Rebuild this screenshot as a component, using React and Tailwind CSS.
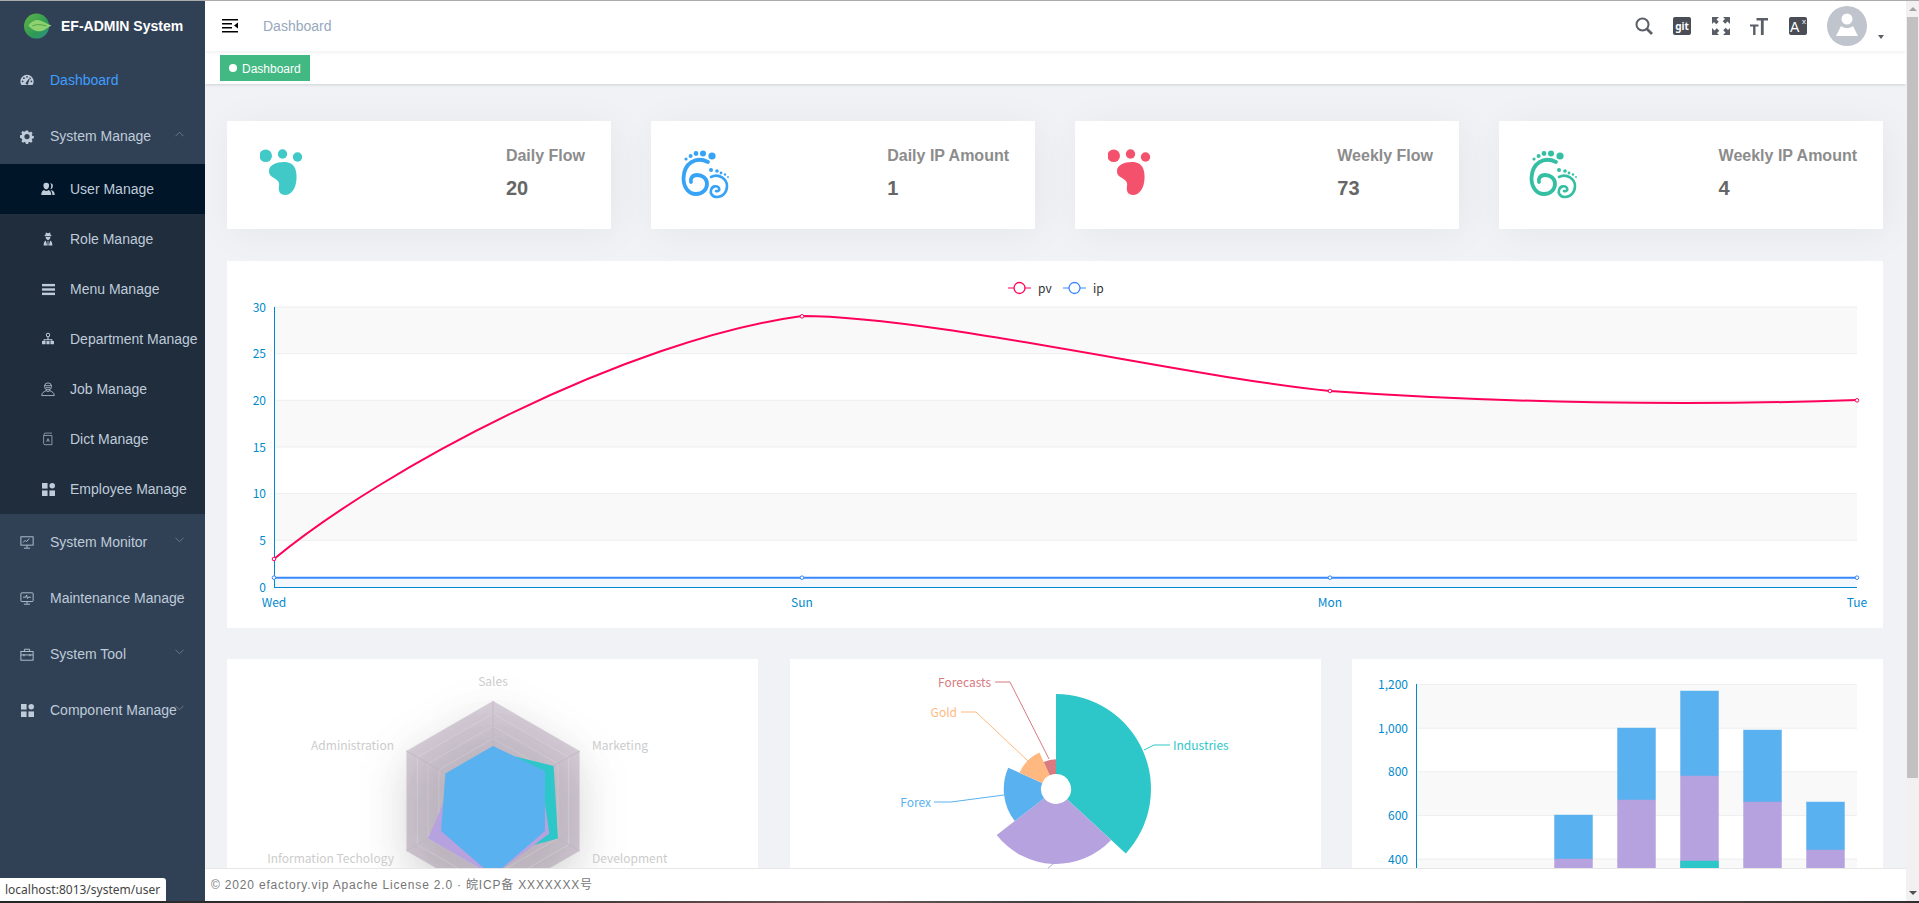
import React from "react";

const CHART_FONT = "'Noto Sans CJK SC','Noto Sans',sans-serif";

const Dash = () => (
  <svg viewBox="0 0 16 16" className="w-[16px] h-[16px]" fill="currentColor">
    <path fillRule="evenodd" d="M8 2a7.6 7.6 0 0 0-7.6 7.6c0 1.4.4 2.8 1.1 3.9.1.2.3.3.5.3h12c.2 0 .4-.1.5-.3.7-1.1 1.1-2.5 1.1-3.900A7.600 7.600 0 0 0 8 2zM3 10.500a1 1 0 1 1 0-2 1 1 0 0 1 0 2zm1.500-3.600a1 1 0 1 1 0-2 1 1 0 0 1 0 2zM8 5.400a1 1 0 1 1 0-2 1 1 0 0 1 0 2zm1.400 6.800a1.500 1.500 0 1 1-2.400-1.600L10.600 6l.7.3-1.800 5zM11.500 7a1 1 0 1 1 0-2 1 1 0 0 1 0 2zm1.500 3.500a1 1 0 1 1 0-2 1 1 0 0 1 0 2z" />
  </svg>
);
const Gear = () => (
  <svg viewBox="0 0 16 16" className="w-[15px] h-[15px]" fill="currentColor">
    <path fillRule="evenodd" d="M6.700 1h2.600l.4 1.900 1.200.5 1.700-1 1.800 1.800-1 1.700.5 1.200 1.900.4v2.600l-1.900.4-.5 1.200 1 1.700-1.800 1.800-1.700-1-1.200.5-.4 1.900H6.700l-.4-1.900-1.200-.5-1.700 1-1.800-1.800 1-1.700-.5-1.200L0 9.300V6.700l1.900-.4.5-1.200-1-1.700 1.800-1.800 1.700 1 1.200-.5L6.700 1zM8 5a3 3 0 1 0 0 6 3 3 0 0 0 0-6z" />
  </svg>
);
const Users = () => (
  <svg viewBox="0 0 16 16" className="w-[16px] h-[16px]" fill="currentColor">
    <path d="M6 .8a3.200 3.200 0 0 1 3.200 3.500C9.200 6.300 8 8.500 6 8.500S2.800 6.300 2.800 4.300A3.200 3.200 0 0 1 6 .8zM.3 14.800c0-3.300 1.500-5 3.200-5.600.7.600 1.600 1 2.500 1s1.800-.4 2.500-1c1.700.6 3.200 2.300 3.200 5.600H.3z" />
    <path d="M10.500 1.300a3 3 0 0 1 3 3.200c0 1.800-1.100 3.800-2.800 3.900.6-1.100 1-2.600 1-3.900 0-1.100-.4-2.200-1.200-3.200zM10.900 9c2.500.3 4.800 1.600 4.800 5.800H13c0-2.400-.7-4.400-2.100-5.800z" />
  </svg>
);
const Role = () => (
  <svg viewBox="0 0 16 16" className="w-[16px] h-[16px]" fill="currentColor">
    <path d="M5 3.500L5.600.5 8 1.300 10.400.5 11 3.500l1.500.8-1.500.6H5l-1.500-.6L5 3.500zM5.300 5.700h5.400c0 2-1.200 3.300-2.700 3.300S5.300 7.700 5.300 5.700zM3 15.500c0-3.300.8-5 2.500-5.800L7 15.500H3zm6 0l1.500-5.800c1.700.8 2.500 2.500 2.500 5.800H9zM7.600 10h.8l.3 5.500h-1.400l.3-5.500z" />
  </svg>
);
const MenuI = () => (
  <svg viewBox="0 0 14 14" className="w-[13px] h-[13px]" fill="currentColor">
    <rect x="0" y="1" width="14" height="2.600" />
    <rect x="0" y="5.700" width="14" height="2.600" />
    <rect x="0" y="10.400" width="14" height="2.600" />
  </svg>
);
const Tree = () => (
  <svg viewBox="0 0 16 16" className="w-[16px] h-[16px]" fill="currentColor">
    <path fillRule="evenodd" d="M8 .8a2.600 2.600 0 0 1 .6 5.100v2.500H13v2h1.800V14H10.800v-3.600h1.200V9.400H4v1h1.200V14H1.200v-3.600H3v-2h4.400V5.900A2.600 2.600 0 0 1 8 .8zm0 1.200a1.400 1.400 0 1 0 0 2.800A1.400 1.400 0 0 0 8 2z" />
    <rect x="6.200" y="10.400" width="3.600" height="3.600" />
  </svg>
);
const Job = () => (
  <svg viewBox="0 0 16 16" className="w-[16px] h-[16px]" fill="none" stroke="currentColor" strokeWidth="0.9">
    <circle cx="8" cy="5" r="4" />
    <path d="M4 4.200h8M5.500 6.500h5M6 8.500v1.500M10 8.500v1.500M.8 15.500c0-2.800 2.200-4.700 5.200-5.500.6 1 3.400 1 4 0 3 .8 5.200 2.700 5.200 5.500H.8z" />
  </svg>
);
const Dict = () => (
  <svg viewBox="0 0 16 16" className="w-[14px] h-[14px]" fill="none" stroke="currentColor" strokeWidth="1" opacity="0.75">
    <path d="M3.500 4V2.500c0-.8.500-1.200 1.200-1.200h7.800M3 4h9.500v10.500H4.500A1.500 1.500 0 0 1 3 13V4z" />
    <path d="M6.500 11l1.500-3.500L9.500 11M7 10h2" />
  </svg>
);
const Grid = () => (
  <svg viewBox="0 0 14 14" className="w-[13px] h-[13px]" fill="currentColor">
    <rect x="0" y="0" width="6" height="6" />
    <circle cx="11" cy="3" r="3" />
    <rect x="0" y="8" width="6" height="6" />
    <rect x="8" y="8" width="6" height="6" />
  </svg>
);
const Monitor = () => (
  <svg viewBox="0 0 16 16" className="w-[15px] h-[15px]" fill="none" stroke="currentColor" strokeWidth="1">
    <rect x="1" y="1.500" width="14" height="9.500" />
    <path d="M3.500 8l2.500-2.500 1.500 1.500 3-3.500M8 11v3M4.500 14.500h7" />
  </svg>
);
const Maint = () => (
  <svg viewBox="0 0 16 16" className="w-[15px] h-[15px]" fill="none" stroke="currentColor" strokeWidth="1">
    <rect x="1" y="1.500" width="14" height="10" rx="1" />
    <path d="M3.500 6.500h3l1-2.500 1 4 1-1.500h3M8 11.500v2.500M4.500 14.500h7" />
  </svg>
);
const Tool = () => (
  <svg viewBox="0 0 16 16" className="w-[15px] h-[15px]" fill="none" stroke="currentColor" strokeWidth="1">
    <rect x="1" y="4.500" width="14" height="10" />
    <path d="M5 4.500V2h6v2.500M1 8.500h14M4.500 7.500v2.500M11.500 7.500v2.500" />
  </svg>
);
const Chevron = ({ up }) => (
  <svg viewBox="0 0 10 6" className="absolute right-[21px] top-[23px] w-[9px] h-[6px] text-[#7f8b99]" fill="none" stroke="currentColor" strokeWidth="0.8">
    <path d={up ? "M.5 5.500L5 1l4.500 4.500" : "M.5 .5L5 5l4.500-4.500"} />
  </svg>
);

function TopItem({ icon, label, active, chev }) {
  return (
    <div className={`relative flex items-center h-[56px] pl-[20px] text-[14px] ${active ? "text-[#409eff]" : "text-[#bfcbd9]"}`}>
      <span className="w-[14px] mr-[16px] flex justify-center text-[#bfcbd9]">{icon}</span>
      <span className="whitespace-nowrap">{label}</span>
      {chev && <Chevron up={chev === "up"} />}
    </div>
  );
}
function SubItem({ icon, label, active }) {
  return (
    <div className={`flex items-center h-[50px] pl-[41px] text-[14px] text-[#bfcbd9] ${active ? "bg-[#001528]" : "bg-[#1f2d3d]"}`}>
      <span className="w-[14px] mr-[15px] flex justify-center">{icon}</span>
      <span className="whitespace-nowrap">{label}</span>
    </div>
  );
}

const Logo = () => (
  <svg viewBox="0 0 30 28" className="w-[30px] h-[27px]">
    <defs>
      <linearGradient id="lg" x1="0" y1="0" x2="1" y2="1">
        <stop offset="0" stopColor="#62b544" />
        <stop offset="0.6" stopColor="#2f9a55" />
        <stop offset="1" stopColor="#2a8f8a" />
      </linearGradient>
    </defs>
    <circle cx="13.500" cy="13.500" r="13" fill="url(#lg)" />
    <path d="M5 13c3-5 9-7 13-5 3 1 6 3 11 5-5 3-8 6-13 6-4 0-8-2-11-6z" fill="#8fd16f" />
    <path d="M9 13.500c4-2 8-2 15 0" stroke="#3f9a45" strokeWidth="0.8" fill="none" />
  </svg>
);

function Sidebar() {
  return (
    <aside className="w-[205px] shrink-0 bg-[#304156] font-['Liberation_Sans',sans-serif]">
      <div className="flex items-center h-[51px] pl-[23px]">
        <Logo />
        <span className="ml-[8px] text-[14px] font-bold text-white whitespace-nowrap">EF-ADMIN System</span>
      </div>
      <TopItem icon={<Dash />} label="Dashboard" active />
      <TopItem icon={<Gear />} label="System Manage" chev="up" />
      <SubItem icon={<Users />} label="User Manage" active />
      <SubItem icon={<Role />} label="Role Manage" />
      <SubItem icon={<MenuI />} label="Menu Manage" />
      <SubItem icon={<Tree />} label="Department Manage" />
      <SubItem icon={<Job />} label="Job Manage" />
      <SubItem icon={<Dict />} label="Dict Manage" />
      <SubItem icon={<Grid />} label="Employee Manage" />
      <TopItem icon={<Monitor />} label="System Monitor" chev="down" />
      <TopItem icon={<Maint />} label="Maintenance Manage" chev="down" />
      <TopItem icon={<Tool />} label="System Tool" chev="down" />
      <TopItem icon={<Grid />} label="Component Manage" chev="down" />
    </aside>
  );
}

const Hamburger = () => (
  <svg viewBox="0 0 16 14" className="w-[16px] h-[14px]" fill="#000">
    <rect x="0" y="0" width="16" height="1.500" />
    <rect x="0" y="4" width="10" height="1.500" />
    <rect x="0" y="8" width="10" height="1.500" />
    <rect x="0" y="12" width="16" height="1.500" />
    <path d="M16 3.500v6l-4-3z" />
  </svg>
);

function Header() {
  const c = "#5a5e66";
  return (
    <header className="flex items-center h-[50px] bg-white shadow-[0_1px_4px_rgba(0,21,41,0.08)] relative z-10 shrink-0">
      <span className="ml-[17px] flex"><Hamburger /></span>
      <span className="ml-[25px] text-[14px] text-[#97a8be]">Dashboard</span>
      <div className="ml-auto flex items-center h-full pr-[22px]">
        <svg viewBox="0 0 18 18" className="w-[18px] h-[18px]" fill="none" stroke={c}>
          <circle cx="7.500" cy="7.500" r="6" strokeWidth="2" />
          <path d="M12 12l5 5" strokeWidth="2.600" />
        </svg>
        <span className="ml-[20px] w-[18px] h-[18px] rounded-[2px] bg-[#4a4d55] flex items-center justify-center text-white text-[10px] font-bold leading-none font-['Noto_Sans',sans-serif]">git</span>
        <svg viewBox="0 0 18 18" className="ml-[21px] w-[18px] h-[18px]" fill={c}>
          <path d="M11 0h7v7l-2.500-2.500-2.300 2.300-2.500-2.500 2.300-2.300zM0 0h7L4.500 2.500l2.300 2.300-2.500 2.500L2 5 0 7zM18 18h-7l2.500-2.500-2.300-2.300 2.500-2.500 2.300 2.300L18 11zM0 18v-7l2.500 2.500 2.300-2.300 2.500 2.500-2.300 2.300L7 18z" />
        </svg>
        <svg viewBox="0 0 18 18" className="ml-[20px] w-[18px] h-[18px]" fill={c}>
          <path d="M6.500 1H18v2.400h-4.300V18h-2.800V3.400H6.500zM0 7.500h8.500v2H5.500V18H3.100V9.500H0z" />
        </svg>
        <span className="ml-[21px] w-[18px] h-[18px] rounded-[2px] bg-[#4a4d55] relative flex text-white font-['Liberation_Sans',sans-serif]">
          <span className="absolute left-[1px] top-[3px] text-[14px] font-normal leading-[14px]">A</span>
          <span className="absolute right-[1px] top-[0px] text-[8px] leading-[9px]">x</span>
        </span>
        <svg viewBox="0 0 40 40" className="ml-[20px] w-[40px] h-[40px]">
          <circle cx="20" cy="20" r="20" fill="#c0c4cc" />
          <circle cx="20" cy="13" r="5.500" fill="#fff" />
          <path d="M9 30l5-10c2 1.500 4 2 6 2s4-.5 6-2l5 10z" fill="#fff" />
        </svg>
        <span className="ml-[11px] mt-[22px] w-0 h-0 border-x-[3.500px] border-x-transparent border-t-[4px] border-t-[#5a5e66]" />
      </div>
    </header>
  );
}

function TagsBar() {
  return (
    <div className="h-[33px] bg-white shrink-0 flex items-start pt-[4px] pl-[15px] shadow-[0_1px_3px_rgba(0,0,0,0.12),0_0_3px_rgba(0,0,0,0.04)] relative font-['Liberation_Sans',sans-serif]">
      <div className="flex items-center h-[26px] w-[90px] bg-[#42b983] pl-[9px] text-white text-[12px]">
        <span className="w-[8px] h-[8px] rounded-full bg-white mr-[5px]" />
        <span className="pt-[1px]">Dashboard</span>
      </div>
    </div>
  );
}

const Foot = ({ color }) => (
  <svg viewBox="0 0 48 50" className="w-[48px] h-[50px]" fill={color}>
    <circle cx="5.700" cy="6.700" r="6.300" />
    <circle cx="22.500" cy="5" r="4.700" />
    <circle cx="37.500" cy="8" r="4.700" />
    <path d="M9 22C9 15 20 12 28 13.500 35 15 37 22 36.500 30 36 40 31 46 25 46 20 46 18 42 19 37 20 33 17 31 14 29 11 27 9 26 9 22Z" />
  </svg>
);
const Swirl = ({ color }) => (
  <svg viewBox="0 0 49 50" className="w-[49px] h-[50px]">
    <g fill={color}>
      <circle cx="31" cy="7" r="3.600" />
      <circle cx="22" cy="4.500" r="3" />
      <circle cx="15" cy="4.500" r="2.400" />
      <circle cx="9.600" cy="7" r="2" />
      <circle cx="5" cy="10" r="1.600" />
      <circle cx="30" cy="21" r="2" />
      <circle cx="36" cy="22" r="1.800" />
      <circle cx="40" cy="24" r="1.400" />
      <circle cx="44" cy="25.500" r="1.200" />
      <circle cx="47" cy="28" r="0.900" />
    </g>
    <g fill="none" stroke={color} strokeLinecap="round">
      <path d="M27 13C15 7 3 14 2.500 29 2.500 39 8 45 15 45 22 45 26 40 26 35 26 29 21 26 16 26 11 26 9 30 10 33" strokeWidth="3.800" />
      <path d="M30 28C38 24 46 30 46 37 46 44 41 48 36 48 31 48 29 44 30 41 31 37 36 36 38 39 39 41 37 43 35 42" strokeWidth="2.600" />
    </g>
  </svg>
);

function Stat({ icon, title, value, iconLeft }) {
  return (
    <div className="h-[108px] bg-white shadow-[4px_4px_40px_rgba(0,0,0,0.05)] flex justify-between font-['Liberation_Sans',sans-serif]" style={{ paddingLeft: iconLeft }}>
      <div className="pt-[28px]">{icon}</div>
      <div className="mr-[26px] pt-[26px]">
        <div className="text-[16px] font-bold leading-[18px] text-[#8c8c8c]">{title}</div>
        <div className="mt-[11px] text-[20px] font-bold leading-[24px] text-[#666]">{value}</div>
      </div>
    </div>
  );
}

const PV = "M274 559C384 468 626 340 802 316C930 316 1200 379 1330 391C1500 403 1690 406 1857 400";

function AxisText({ x, y, children, anchor = "middle", fill = "#008acd", size = 12 }) {
  return (
    <text x={x} y={Number(y) - 1} textAnchor={anchor} dominantBaseline="central" fill={fill} fontSize={size} fontFamily={CHART_FONT}>
      {children}
    </text>
  );
}

function LineChart() {
  const ticks = [0, 5, 10, 15, 20, 25, 30];
  const y = (v) => 587 - (v * 280) / 30;
  return (
    <svg viewBox="227 261 1656 367" className="block w-full h-[367px]">
      {[30, 20, 10].map((v) => (
        <rect key={v} x="274" y={y(v)} width="1583" height={280 / 6} fill="#f9f9f9" />
      ))}
      {ticks.slice(1).map((v) => (
        <line key={v} x1="274" x2="1857" y1={y(v)} y2={y(v)} stroke="#eee" />
      ))}
      <rect x="274" y={y(1)} width="1583" height={587 - y(1)} fill="#f3f8ff" />
      <line x1="274.500" x2="274.500" y1="307" y2="587" stroke="#008acd" />
      <line x1="274" x2="1857" y1="587.500" y2="587.500" stroke="#008acd" />
      {ticks.map((v) => (
        <AxisText key={v} x="266" y={y(v)} anchor="end">{v}</AxisText>
      ))}
      {[["Wed", 274], ["Sun", 802], ["Mon", 1330], ["Tue", 1857]].map(([t, x]) => (
        <AxisText key={t} x={x} y="602">{t}</AxisText>
      ))}
      <path d={PV} fill="none" stroke="#ff005a" strokeWidth="2" />
      <line x1="274" x2="1857" y1={y(1)} y2={y(1)} stroke="#3888fa" strokeWidth="2" />
      {[[274, 3], [802, 29], [1330, 21], [1857, 20]].map(([x, v]) => (
        <circle key={x} cx={x} cy={y(v)} r="1.800" fill="#fff" stroke="#ff005a" />
      ))}
      {[274, 802, 1330, 1857].map((x) => (
        <circle key={x} cx={x} cy={y(1)} r="1.800" fill="#fff" stroke="#3888fa" />
      ))}
      <line x1="1008" x2="1031" y1="288" y2="288" stroke="#ff005a" />
      <circle cx="1019.500" cy="288" r="5.500" fill="#fff" stroke="#ff005a" strokeWidth="1.300" />
      <AxisText x="1038" y="288" anchor="start" fill="#333">pv</AxisText>
      <line x1="1063" x2="1086" y1="288" y2="288" stroke="#3888fa" />
      <circle cx="1074.500" cy="288" r="5.500" fill="#fff" stroke="#3888fa" strokeWidth="1.300" />
      <AxisText x="1093" y="288" anchor="start" fill="#333">ip</AxisText>
    </svg>
  );
}

function radarPts(vals, cx = 493, cy = 801, R = 100) {
  return vals
    .map((v, i) => {
      const t = (i * Math.PI) / 3;
      return `${cx - R * v * Math.sin(t)},${cy - R * v * Math.cos(t)}`;
    })
    .join(" ");
}

function RadarChart() {
  const ring = (f) => radarPts([f, f, f, f, f, f]);
  const ringPath = (f) => "M" + ring(f).split(" ").join("L") + "Z";
  const rings = [8, 7, 6, 5, 4, 3, 2, 1];
  return (
    <svg viewBox="227 659 531 300" className="block w-full h-[300px]">
      <defs>
        <filter id="rs" filterUnits="userSpaceOnUse" x="227" y="659" width="531" height="300">
          <feDropShadow dx="0" dy="15" stdDeviation="22" floodColor="#000" floodOpacity="0.5" />
        </filter>
      </defs>
      {rings.map((k) => (
        <path key={k} d={ringPath(k / 8) + ringPath((k - 1) / 8 || 0.001)} fillRule="evenodd" fill="rgba(127,95,132,0.3)" filter="url(#rs)" />
      ))}
      {rings.map((k) => (
        <polygon key={k} points={ring(k / 8)} fill="none" stroke="#ddd" strokeOpacity="0.3" />
      ))}
      {[0, 1, 2, 3, 4, 5].map((i) => {
        const t = (i * Math.PI) / 3;
        return <line key={i} x1="493" y1="801" x2={493 - 100 * Math.sin(t)} y2={801 - 100 * Math.cos(t)} stroke="#b9b5bc" strokeOpacity="0.7" />;
      })}
      <polygon points={radarPts([0.5, 0.35, 0.6, 0.55, 0.75, 0.7])} fill="#2ec7c9" />
      <polygon points={radarPts([0.4, 0.45, 0.75, 0.75, 0.65, 0.55])} fill="#b6a2de" />
      <polygon points={radarPts([0.55, 0.55, 0.6, 0.75, 0.6, 0.6])} fill="#5ab1ef" />
      <AxisText x="493" y="681" fill="#ccc">Sales</AxisText>
      <AxisText x="394" y="745" anchor="end" fill="#ccc">Administration</AxisText>
      <AxisText x="592" y="745" anchor="start" fill="#ccc">Marketing</AxisText>
      <AxisText x="394" y="858" anchor="end" fill="#ccc">Information Techology</AxisText>
      <AxisText x="592" y="858" anchor="start" fill="#ccc">Development</AxisText>
    </svg>
  );
}

function sector(a0, a1, r0, r, cx = 1056, cy = 789) {
  const p = (a, q) => [cx + q * Math.sin(a), cy - q * Math.cos(a)];
  const [x0, y0] = p(a0, r);
  const [x1, y1] = p(a1, r);
  const [x2, y2] = p(a1, r0);
  const [x3, y3] = p(a0, r0);
  const large = a1 - a0 > Math.PI ? 1 : 0;
  return `M${x0} ${y0}A${r} ${r} 0 ${large} 1 ${x1} ${y1}L${x2} ${y2}A${r0} ${r0} 0 ${large} 0 ${x3} ${y3}Z`;
}

function PieChart() {
  const data = [
    [320, "#2ec7c9"],
    [240, "#b6a2de"],
    [149, "#5ab1ef"],
    [100, "#ffb980"],
    [59, "#d87a80"],
  ];
  let a = 0;
  const total = 868;
  return (
    <svg viewBox="790 659 531 300" className="block w-full h-[300px]">
      {data.map(([v, c]) => {
        const a0 = a;
        a += (v / total) * 2 * Math.PI;
        return <path key={c} d={sector(a0, a, 15, 15 + (80 * v) / 320)} fill={c} />;
      })}
      <g fill="none">
        <path d="M1144 750L1154 745L1170 745" stroke="#2ec7c9" />
        <path d="M1004 795L951 802L934 802" stroke="#5ab1ef" />
        <path d="M1028 761L976 712L961 712" stroke="#ffb980" />
        <path d="M1049 759L1010 682L995 682" stroke="#d87a80" />
        <path d="M1053 864L1047 869L1030 869" stroke="#b6a2de" />
      </g>
      <AxisText x="1173" y="745" anchor="start" fill="#2ec7c9">Industries</AxisText>
      <AxisText x="931" y="802" anchor="end" fill="#5ab1ef">Forex</AxisText>
      <AxisText x="957" y="712" anchor="end" fill="#ffb980">Gold</AxisText>
      <AxisText x="991" y="682" anchor="end" fill="#d87a80">Forecasts</AxisText>
    </svg>
  );
}

function BarChart() {
  const gy = (v) => 859 - ((v - 400) * 43.6) / 200;
  const bars = [
    [1554.5, 815, 859, null],
    [1617.5, 728, 800, null],
    [1680.5, 691, 776, 861],
    [1743.5, 730, 802, null],
    [1806.5, 802, 850, null],
  ];
  return (
    <svg viewBox="1352 659 531 300" className="block w-full h-[300px]">
      {[1200, 800, 400].map((v) => (
        <rect key={v} x="1416" y={gy(v)} width="441" height="43.600" fill="#f9f9f9" />
      ))}
      {[1200, 1000, 800, 600, 400].map((v) => (
        <line key={v} x1="1416" x2="1857" y1={gy(v)} y2={gy(v)} stroke="#eee" />
      ))}
      <line x1="1416.500" x2="1416.500" y1="684" y2="950" stroke="#008acd" />
      {[[1200, "1,200"], [1000, "1,000"], [800, "800"], [600, "600"], [400, "400"]].map(([v, t]) => (
        <AxisText key={v} x="1408" y={gy(v)} anchor="end">{t}</AxisText>
      ))}
      {bars.map(([x, blue, purple, teal]) => (
        <g key={x}>
          <rect x={x} y={blue} width="38" height={purple - blue} fill="#5ab1ef" stroke="#5ab1ef" strokeOpacity="0.45" />
          <rect x={x} y={purple} width="38" height={950 - purple} fill="#b6a2de" stroke="#b6a2de" strokeOpacity="0.45" />
          {teal && <rect x={x} y={teal} width="38" height={950 - teal} fill="#2ec7c9" stroke="#2ec7c9" strokeOpacity="0.45" />}
        </g>
      ))}
    </svg>
  );
}

export default function App() {
  return (
    <div className="relative h-screen w-full overflow-hidden flex flex-col bg-[#f0f2f5]">
      <div className="h-px shrink-0 bg-[#ababab]" />
      <div className="flex flex-1 min-h-0">
        <Sidebar />
        <div className="relative flex-1 min-w-0 flex flex-col overflow-hidden">
          <div className="font-['Liberation_Sans',sans-serif]">
            <Header />
          </div>
          <TagsBar />
          <main className="flex-1 min-h-0 overflow-hidden pt-[37px] pl-[22px] pr-[23px]">
            <div className="grid grid-cols-4 gap-[40px]">
              <Stat iconLeft={33} icon={<Foot color="#40c9c6" />} title="Daily Flow" value="20" />
              <Stat iconLeft={30} icon={<Swirl color="#36a3f7" />} title="Daily IP Amount" value="1" />
              <Stat iconLeft={33} icon={<Foot color="#f4516c" />} title="Weekly Flow" value="73" />
              <Stat iconLeft={30} icon={<Swirl color="#34bfa3" />} title="Weekly IP Amount" value="4" />
            </div>
            <div className="mt-[32px] bg-white h-[367px]">
              <LineChart />
            </div>
            <div className="mt-[31px] grid grid-cols-3 gap-[31.5px]">
              <div className="bg-white h-[300px] overflow-hidden"><RadarChart /></div>
              <div className="bg-white h-[300px] overflow-hidden"><PieChart /></div>
              <div className="bg-white h-[300px] overflow-hidden"><BarChart /></div>
            </div>
          </main>
          <footer className="absolute left-0 right-0 bottom-0 h-[33px] bg-white border-t border-[#e7e7e7] flex items-center pl-[6px] text-[12px] tracking-[0.82px] text-[#767676] font-['Liberation_Sans','Noto_Sans_CJK_SC',sans-serif] whitespace-nowrap">
            © 2020 efactory.vip Apache License 2.0 · 皖ICP备 XXXXXXX号
          </footer>
        </div>
        <div className="w-[13px] shrink-0 bg-[#f1f1f1] flex flex-col items-center">
          <div className="h-[16px] flex items-center justify-center shrink-0">
            <span className="w-0 h-0 border-x-[4px] border-x-transparent border-b-[4px] border-b-[#a3a3a3]" />
          </div>
          <div className="w-[11px] h-[761px] bg-[#c1c1c1] shrink-0" />
          <div className="mt-auto h-[16px] flex items-center justify-center shrink-0">
            <span className="w-0 h-0 border-x-[4px] border-x-transparent border-t-[4px] border-t-[#505050]" />
          </div>
        </div>
      </div>
      <div className="h-[2px] shrink-0 bg-[linear-gradient(90deg,#262626,#3a3030_25%,#6b5a58_45%,#3e3e3e_55%,#6a5550_70%,#5a4a4a_85%,#332d2d)]" />
      <div className="absolute left-0 bottom-[2px] h-[23px] w-[166px] bg-white rounded-tr-[3px] flex items-center pl-[5px] text-[12px] text-[#444] whitespace-nowrap font-['Noto_Sans',sans-serif]">
        localhost:8013/system/user
      </div>
    </div>
  );
}
